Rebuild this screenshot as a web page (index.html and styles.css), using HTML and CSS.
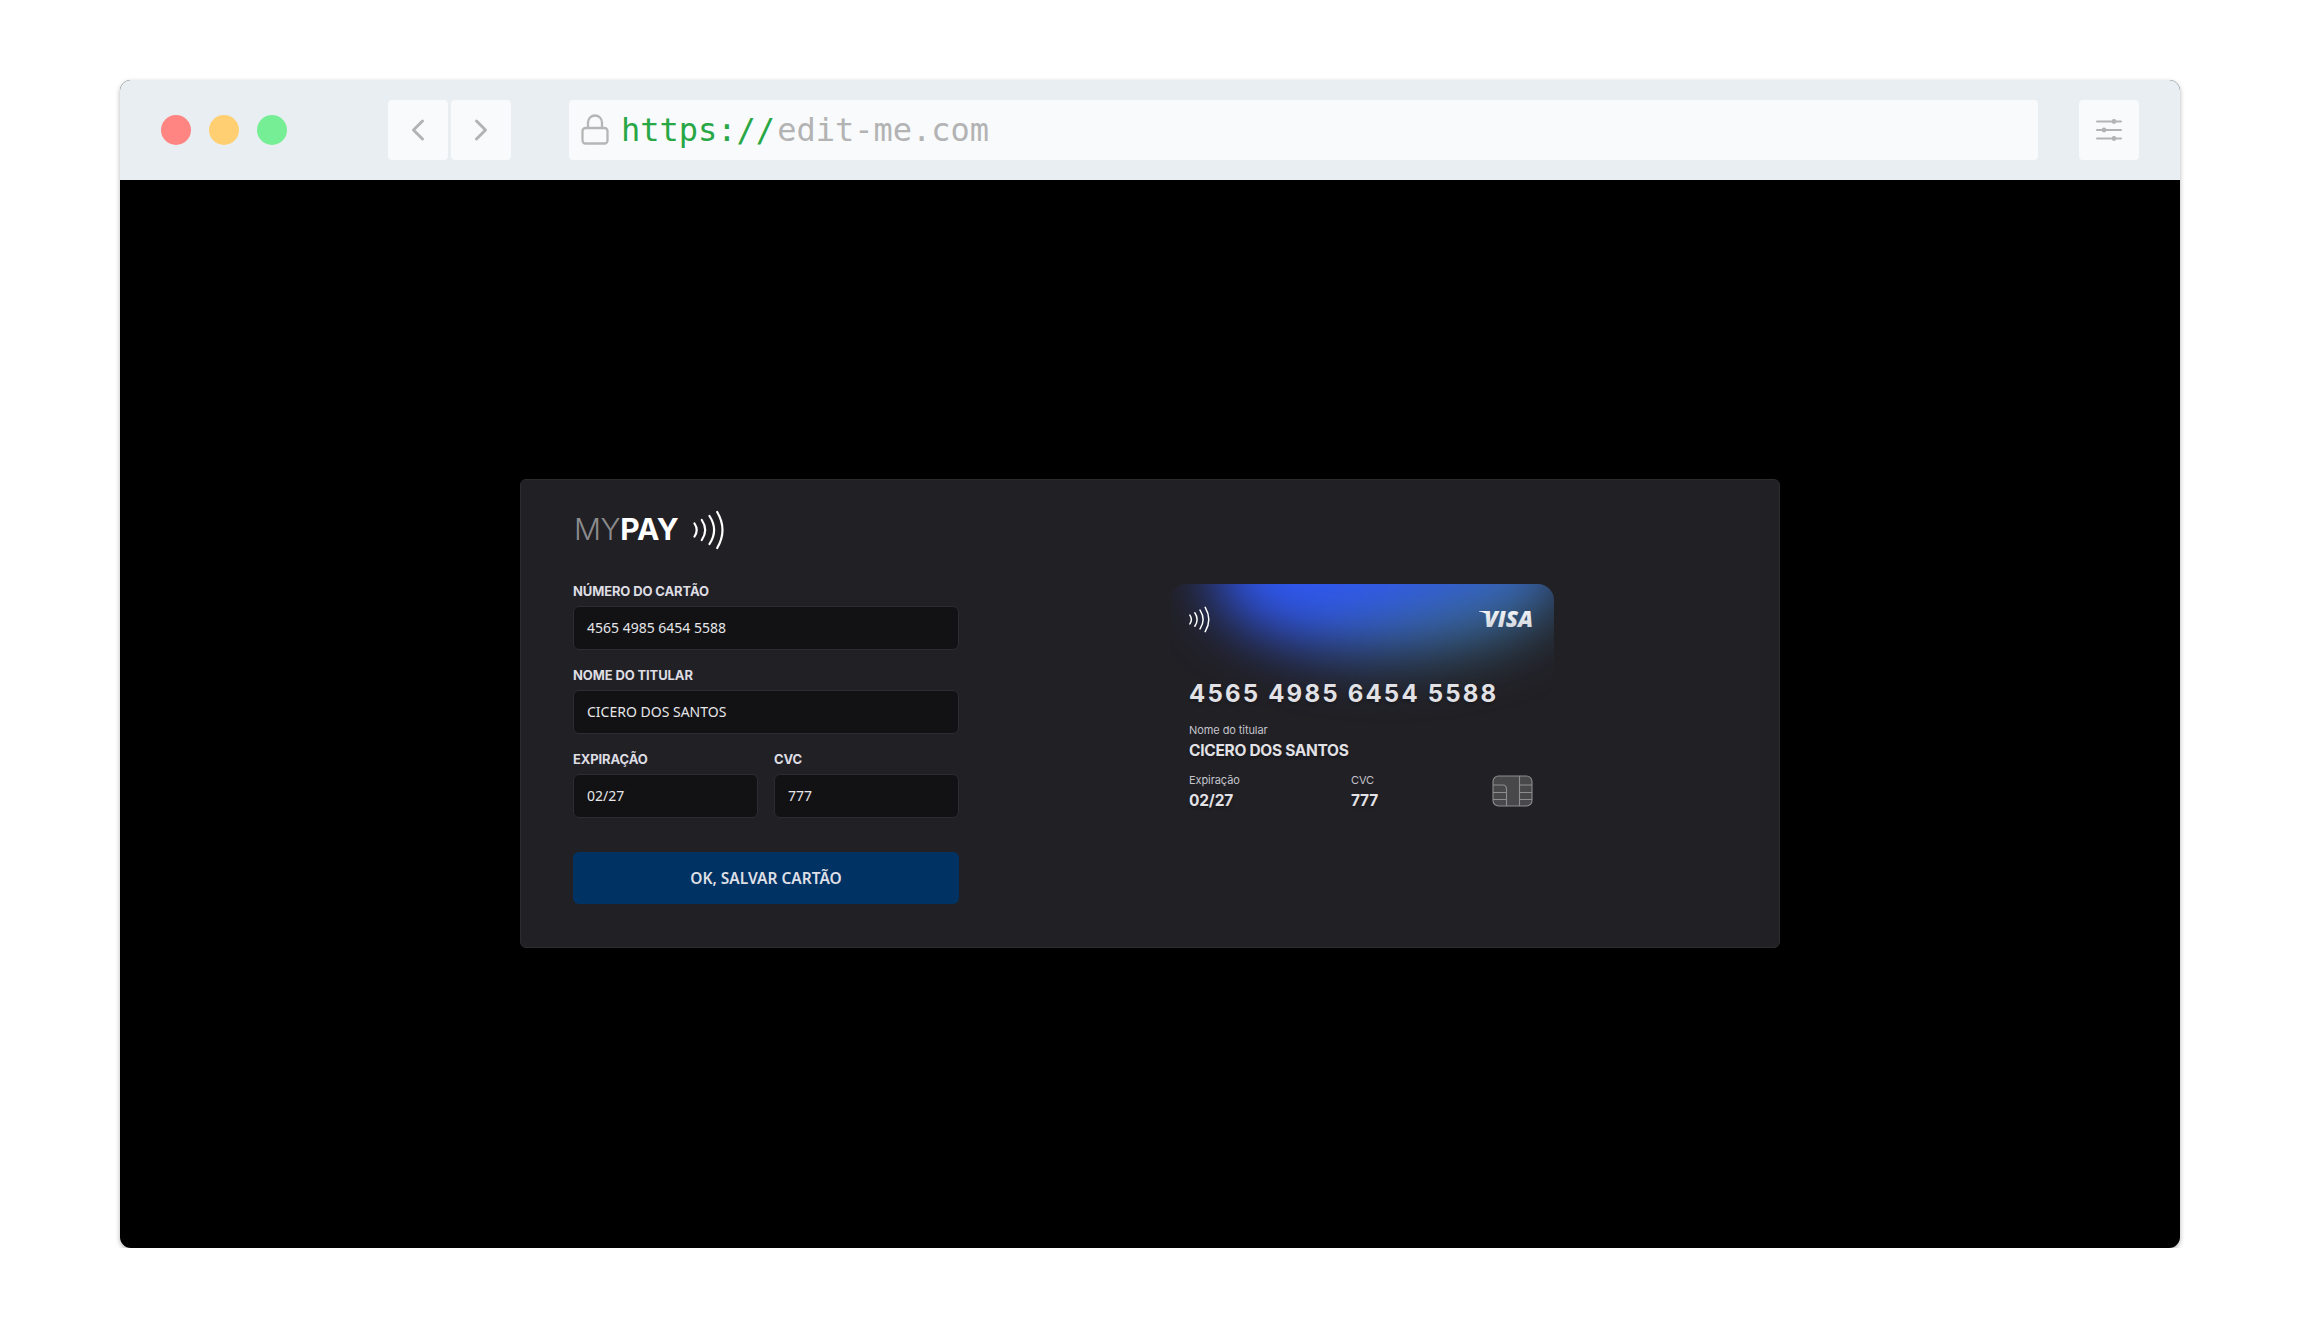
FILE: index.html
```html
<!DOCTYPE html>
<html lang="pt-BR">
<head>
<meta charset="utf-8">
<title>MyPay</title>
<link rel="stylesheet" href="styles.css">
</head>
<body>
<div class="window">
  <header class="toolbar">
    <div class="dots"><span class="dot red"></span><span class="dot yellow"></span><span class="dot green"></span></div>
    <div class="nav">
      <div class="tile"><svg width="60" height="60" viewBox="0 0 60 60"><path class="chev" d="M34.5 21 25.500 30l9 9"/></svg></div>
      <div class="tile"><svg width="60" height="60" viewBox="0 0 60 60"><path class="chev" d="M25.500 21l9 9-9 9"/></svg></div>
    </div>
    <div class="address">
      <svg class="lock" width="28" height="32" viewBox="0 0 28 32"><rect x="1.500" y="14" width="25" height="15.500" rx="3"/><path d="M7 14V8.500a7 7 0 0 1 14 0V14"/></svg>
      <span class="scheme">https://</span><span class="host">edit-me.com</span>
    </div>
    <div class="tile settings"><svg width="60" height="60" viewBox="0 0 60 60"><path d="M18 21.500h24M18 30h24M18 38.500h24"/><circle cx="35" cy="21.500" r="2.400"/><circle cx="25" cy="30" r="2.400"/><circle cx="35" cy="38.500" r="2.400"/></svg></div>
  </header>
  <main class="page">
    <section class="panel">
      <div class="logo">
        <span class="logo-my">MY</span><span class="logo-pay">PAY</span>
        <svg class="waves" width="32" height="40" viewBox="0 0 32 40"><path d="M2.500 13.500q4.400 6.500 0 13M9.800 10q6.800 10 0 20M17.500 6q9.200 14 0 28M25.200 2q10.600 18 0 36"/></svg>
      </div>
      <div class="columns">
        <form class="form">
          <label class="field"><span class="label">NÚMERO DO CARTÃO</span><span class="input">4565 4985 6454 5588</span></label>
          <label class="field"><span class="label">NOME DO TITULAR</span><span class="input">CICERO DOS SANTOS</span></label>
          <div class="pair">
            <label class="field"><span class="label">EXPIRAÇÃO</span><span class="input">02/27</span></label>
            <label class="field"><span class="label">CVC</span><span class="input">777</span></label>
          </div>
          <button class="save" type="button">OK, SALVAR CARTÃO</button>
        </form>
        <div class="card">
          <div class="glow"></div>
          <div class="card-top">
            <svg class="waves" width="22" height="27" viewBox="0 0 32 40"><path d="M2.500 13.500q4.400 6.500 0 13M9.800 10q6.800 10 0 20M17.500 6q9.200 14 0 28M25.200 2q10.600 18 0 36"/></svg>
            <svg class="visa" width="60" height="36" viewBox="0 0 60 36">
              <defs><linearGradient id="silver" x1="0" y1="0" x2="0" y2="1"><stop offset="0" stop-color="#fff"/><stop offset="1" stop-color="#c9d0d8"/></linearGradient></defs>
              <path d="M0 9h7q2 0 2.500 2l1 4Q8 11 0 9.600z" fill="#f4f6f8"/>
              <text x="5" y="25" textLength="49" lengthAdjust="spacingAndGlyphs" fill="url(#silver)">VISA</text>
            </svg>
          </div>
          <div class="card-number">4565 4985 6454 5588</div>
          <div class="small">Nome do titular</div>
          <div class="value holder">CICERO DOS SANTOS</div>
          <div class="card-bottom">
            <div class="cell"><div class="small">Expiração</div><div class="value">02/27</div></div>
            <div class="cell"><div class="small">CVC</div><div class="value">777</div></div>
            <svg class="chip" width="41" height="32" viewBox="0 0 41 32"><rect x="1" y="1" width="39" height="30" rx="5.500"/><path d="M27.500 1v30M27.500 10H40M27.500 17.500H40M27.500 24.500H40M1 10h9.500q4 0 4 4v17M1 17.500h13.500M1 24.500h13.500"/></svg>
          </div>
        </div>
      </div>
    </section>
  </main>
</div>
</body>
</html>
```
FILE: styles.css
```css
* { box-sizing: border-box; }
body { margin: 0; background: #fff; padding: 80px 120px 0; font-family: Inter, sans-serif; }
svg { display: block; flex: none; }
.window { height: 1168px; border-radius: 11px; overflow: hidden; background: #000; box-shadow: 0 2px 5px rgba(0,0,0,.3); display: flex; flex-direction: column; }
.toolbar { height: 100px; background: #e8eef1; display: flex; align-items: center; padding: 0 41px; flex: none; }
.dots { display: flex; gap: 18px; width: 227px; }
.dot { width: 30px; height: 30px; border-radius: 50%; }
.red { background: #ff8583; }
.yellow { background: #ffcf72; }
.green { background: #76ee95; }
.nav { display: flex; gap: 3px; margin-right: 58px; }
.tile { width: 60px; height: 60px; border-radius: 4px; background: #f8fafc; }
.chev { fill: none; stroke: #b3b3b3; stroke-width: 3; stroke-linecap: round; stroke-linejoin: round; }
.address { flex: 1; height: 60px; border-radius: 4px; background: #f8fafc; display: flex; align-items: center; padding-left: 12px; font-family: "DejaVu Sans Mono", monospace; font-size: 32px; margin-right: 41px; }
.lock { margin-right: 12px; fill: none; stroke: #b6b6b6; stroke-width: 2.3; }
.scheme { color: #28a745; margin-right: 2px; }
.host { color: #b3b3b3; }
.settings svg { stroke: #b3b3b3; stroke-width: 2; fill: #b3b3b3; stroke-linecap: round; }
.settings circle { stroke: none; }
.page { flex: 1; display: flex; align-items: flex-start; justify-content: center; padding-top: 299px; }
.panel { width: 1260px; height: 469px; background: #212025; border: 1px solid #2b2b30; border-radius: 6px; padding: 27px 52px 0; }
.logo { display: flex; align-items: center; height: 44px; font-size: 30px; line-height: 44px; }
.logo-my { color: #8b8b8d; font-weight: 300; margin-left: 1px; letter-spacing: -0.4px; }
.logo-pay { color: #fff; font-weight: 700; letter-spacing: -0.2px; }
.waves { fill: none; stroke: #fff; stroke-width: 2; stroke-linecap: round; }
.logo .waves { margin-left: 13px; margin-top: 1px; stroke-width: 2.2; }
.columns { display: flex; gap: 211px; margin-top: 33px; }
.form { width: 386px; display: flex; flex-direction: column; }
.field { display: flex; flex-direction: column; height: 84px; }
.label { height: 22px; line-height: 14px; font-size: 13px; font-weight: 700; letter-spacing: -0.12px; color: #dedde3; white-space: nowrap; }
.input { height: 44px; border: 1px solid #2c2c31; border-radius: 6px; background: #121214; padding-left: 13px; color: #e6e6ea; font: 14px/42px "Noto Sans", sans-serif; }
.pair { display: grid; grid-template-columns: 1fr 1fr; gap: 16px; }
.save { margin-top: 16px; height: 52px; border: 0; border-radius: 6px; background: #003364; color: #dedfe6; font: 600 15.5px/52px "Noto Sans", sans-serif; padding: 0; }
.card { width: 384px; height: 246px; border-radius: 16px; overflow: hidden; position: relative; padding: 22px 21px 0 19px; color: #e1e1e6; }
.glow { position: absolute; left: 42px; top: -90px; width: 356px; height: 160px; border-radius: 50%; background: linear-gradient(157deg, #2f57f0 50%, #3c6f92 80%); filter: blur(29px); }
.card > :not(.glow) { position: relative; }
.card-top { display: flex; justify-content: space-between; height: 62px; }
.card .waves { margin-left: -1px; stroke-width: 2.2; }
.visa { margin: -4px -6px 0 0; overflow: visible; }
.visa text { font: italic 800 23px "Open Sans", sans-serif; }
.card-number { font-size: 24px; font-weight: 700; line-height: 30px; height: 44px; margin-top: 11px; letter-spacing: 2.2px; white-space: nowrap; }
.small { font-size: 11px; line-height: 15px; height: 18px; color: #c4c4cc; letter-spacing: -0.08px; }
.value { font-size: 15.5px; font-weight: 700; line-height: 20px; letter-spacing: -0.2px; }
.holder { letter-spacing: -0.3px; }
.card-number, .value { text-shadow: 0 2px 3px rgba(0,0,0,.25); }
.card-bottom { display: flex; margin-top: 12px; }
.cell { width: 162px; flex: none; }
.cell + .cell { width: 60px; }
.chip { margin: 2px 0 0 auto; fill: #48484a; stroke: #8d8d8f; stroke-width: 1.1; }
.chip path { fill: none; }
```
